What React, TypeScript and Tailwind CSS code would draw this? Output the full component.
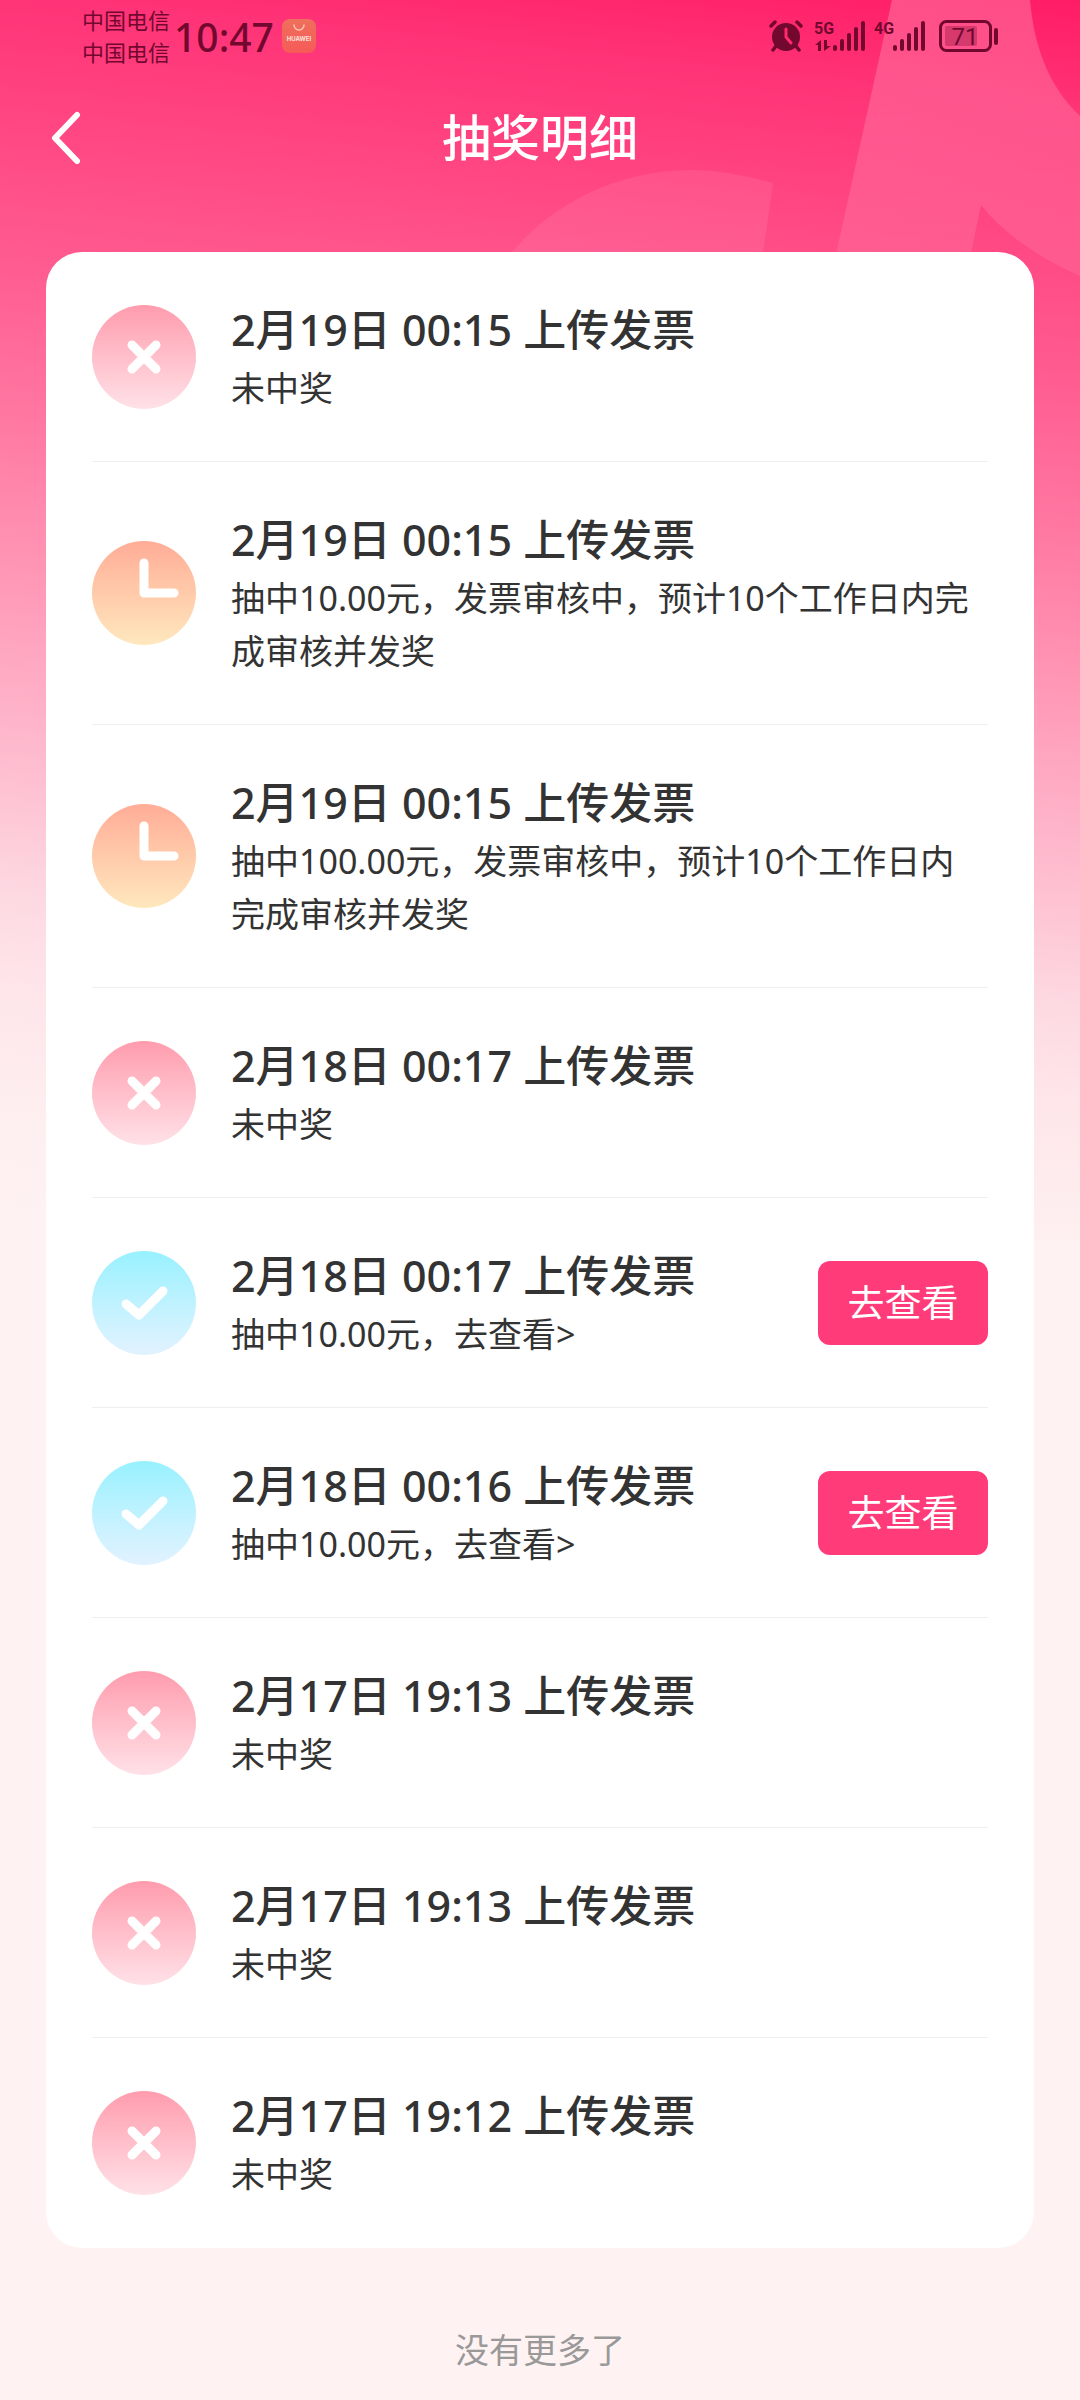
import React from 'react';

type Status = 'lost' | 'pending' | 'won';

interface DrawRecord {
  id: number;
  title: string;
  detail: string;
  status: Status;
}

const records: DrawRecord[] = [
  { id: 1, title: '2月19日 00:15 上传发票', detail: '未中奖', status: 'lost' },
  { id: 2, title: '2月19日 00:15 上传发票', detail: '抽中10.00元，发票审核中，预计10个工作日内完成审核并发奖', status: 'pending' },
  { id: 3, title: '2月19日 00:15 上传发票', detail: '抽中100.00元，发票审核中，预计10个工作日内完成审核并发奖', status: 'pending' },
  { id: 4, title: '2月18日 00:17 上传发票', detail: '未中奖', status: 'lost' },
  { id: 5, title: '2月18日 00:17 上传发票', detail: '抽中10.00元，去查看>', status: 'won' },
  { id: 6, title: '2月18日 00:16 上传发票', detail: '抽中10.00元，去查看>', status: 'won' },
  { id: 7, title: '2月17日 19:13 上传发票', detail: '未中奖', status: 'lost' },
  { id: 8, title: '2月17日 19:13 上传发票', detail: '未中奖', status: 'lost' },
  { id: 9, title: '2月17日 19:12 上传发票', detail: '未中奖', status: 'lost' }
];

const statusStyles: Record<Status, { circle: string; path: string }> = {
  lost: { circle: 'from-[#ff9cae] to-[#ffe1e8]', path: 'M40 40L64 64M64 40L40 64' },
  pending: { circle: 'from-[#ffac97] to-[#ffe8bd]', path: 'M52 22V52H82' },
  won: { circle: 'from-[#97f1ff] to-[#e2f2ff]', path: 'M34 53L47 64L71 40' }
};

const StatusIcon: React.FC<{ status: Status }> = ({ status }) => {
  const { circle, path } = statusStyles[status];
  return (
    <div className={`size-[104px] shrink-0 rounded-full bg-linear-to-b ${circle}`}>
      <svg viewBox="0 0 104 104" className="size-full" fill="none" stroke="#fff" strokeWidth="9" strokeLinecap="round" strokeLinejoin="round">
        <path d={path} />
      </svg>
    </div>
  );
};

const SignalBars: React.FC = () => (
  <svg viewBox="0 0 34 32" className="h-8 w-[34px]" fill="currentColor">
    <rect x="0" y="25" width="4" height="6" rx="2" />
    <rect x="7" y="19" width="4" height="12" rx="2" />
    <rect x="14" y="13" width="4" height="18" rx="2" />
    <rect x="21" y="7" width="4" height="24" rx="2" />
    <rect x="28" y="1" width="4" height="30" rx="2" />
  </svg>
);

const StatusBar: React.FC = () => (
  <div className="flex h-[72px] items-center justify-between pl-[82px] pr-[81px] text-[#73082f]">
    <div className="flex items-center">
      <div className="text-[22px] leading-8">
        <div>中国电信</div>
        <div>中国电信</div>
      </div>
      <div className="ml-1 pt-0.5 font-['Noto_Sans'] text-[39px] font-medium leading-[70px]">10:47</div>
      <svg viewBox="0 0 34 34" className="ml-2 size-[34px]">
        <defs>
          <linearGradient id="store" x1="0" y1="0" x2="0" y2="1">
            <stop offset="0" stopColor="#ee705c" />
            <stop offset="1" stopColor="#f65a58" />
          </linearGradient>
        </defs>
        <rect width="34" height="34" rx="8" fill="url(#store)" />
        <path d="M12 6a5 5 0 0 0 10 0" fill="none" stroke="#ffc4b4" strokeWidth="1.5" strokeLinecap="round" />
        <text x="17" y="22" textAnchor="middle" fontSize="6" fontWeight="700" fill="#ffe4dc" fontFamily="Inter, sans-serif">HUAWEI</text>
      </svg>
    </div>

    <div className="flex items-center">
      <svg viewBox="0 0 34 32" className="h-8 w-[34px]" fill="currentColor" stroke="currentColor" strokeLinecap="round">
        <circle cx="17" cy="17" r="14" stroke="none" />
        <path d="M2 6L6 2M28 2L32 6M7 26L4 30M27 26L30 30" strokeWidth="3.5" fill="none" />
        <path d="M17 9V17L22 23" stroke="#ff2a6c" strokeWidth="3" fill="none" />
      </svg>
      <div className="ml-3 flex h-8 items-end">
        <svg viewBox="0 0 18 32" className="h-8 w-[18px] overflow-visible" fill="currentColor">
          <text x="-1" y="14" fontSize="16" fontWeight="700" fontFamily="Roboto, sans-serif">5G</text>
          <path d="M6 20V31H3V25H0ZM9 31V20H12V26H16Z" />
        </svg>
        <SignalBars />
      </div>
      <div className="ml-2 flex h-8 items-end">
        <svg viewBox="0 0 18 32" className="h-8 w-[18px] overflow-visible" fill="currentColor">
          <text x="-1" y="14" fontSize="16" fontWeight="700" fontFamily="Roboto, sans-serif">4G</text>
        </svg>
        <SignalBars />
      </div>
      <svg viewBox="0 0 60 32" className="ml-3 h-8 w-[60px] overflow-visible" fill="currentColor">
        <rect x="1.500" y="1.500" width="50" height="29" rx="6" fill="none" stroke="currentColor" strokeWidth="3" />
        <rect x="6" y="6" width="32" height="20" rx="2" opacity="0.3" />
        <rect x="55" y="8" width="4" height="17" rx="2" />
        <text x="26" y="25" textAnchor="middle" fontSize="24" fontFamily="Roboto, sans-serif">71</text>
      </svg>
    </div>
  </div>
);

const App: React.FC = () => {
  return (
    <div className="relative min-h-screen overflow-hidden bg-[#fff2f2] font-['Noto_Sans','Noto_Sans_CJK_SC',sans-serif]">
      {/* Page backdrop */}
      <div className="absolute inset-x-0 top-0 h-[1240px] bg-[linear-gradient(186deg,#ff1c66_0%,#ff3377_8%,#ff5c91_28%,#ff7aa3_40%,#ff98b6_51%,#feb3c9_61%,#fec6d5_68%,#fdd8e1_74%,#fee5e9_81%,#fef0f0_92%,#fff2f2_100%)]" />
      <svg viewBox="0 0 1080 300" className="absolute inset-x-0 top-0 w-full">
        <defs>
          <linearGradient id="ribbon" x1="0" y1="0" x2="0" y2="1">
            <stop offset="0" stopColor="#fff" stopOpacity="0.21" />
            <stop offset="1" stopColor="#fff" stopOpacity="0.07" />
          </linearGradient>
        </defs>
        <path d="M892 0H1030C1034 48 1050 88 1080 116V276C1040 258 1006 236 981 205L961 300H826Z" fill="url(#ribbon)" />
        <path d="M490 300L512 252C552 204 618 170 690 170C720 170 748 176 773 183C768 220 762 260 755 300Z" fill="#fff" fillOpacity="0.08" />
      </svg>

      <div className="relative">
        <StatusBar />

        <header className="flex h-[132px] items-center justify-between px-12">
          <button type="button" aria-label="返回" className="text-white">
            <svg viewBox="0 0 36 60" className="h-[60px] w-9" fill="none" stroke="currentColor" strokeWidth="6" strokeLinecap="round" strokeLinejoin="round">
              <path d="M29 7L7 30L29 53" />
            </svg>
          </button>
          <h1 className="pb-0.5 text-[49px] font-medium leading-[72px] text-white">抽奖明细</h1>
          <div className="w-9" />
        </header>

        <main className="mx-[46px] mt-12 rounded-[36px] bg-white px-[46px]">
          <ul>
            {records.map((record) => (
              <li key={record.id} className="flex items-center gap-[35px] border-b border-[#eeeeee] py-[46px] last:border-transparent">
                <StatusIcon status={record.status} />
                <div className="flex-1 pr-1 text-[#333333]">
                  <h2 className="text-[43px] font-medium leading-[64px]">{record.title}</h2>
                  <p className="text-[34px] leading-[53px]">{record.detail}</p>
                </div>
                {record.status === 'won' && (
                  <button type="button" className="h-[84px] w-[170px] rounded-xl bg-[#ff3b79] text-[37px] text-white">
                    去查看
                  </button>
                )}
              </li>
            ))}
          </ul>
        </main>

        <p className="pb-6 pt-[76px] text-center text-[34px] leading-[52px] text-[#999999]">没有更多了</p>
      </div>
    </div>
  );
};

export default App;
